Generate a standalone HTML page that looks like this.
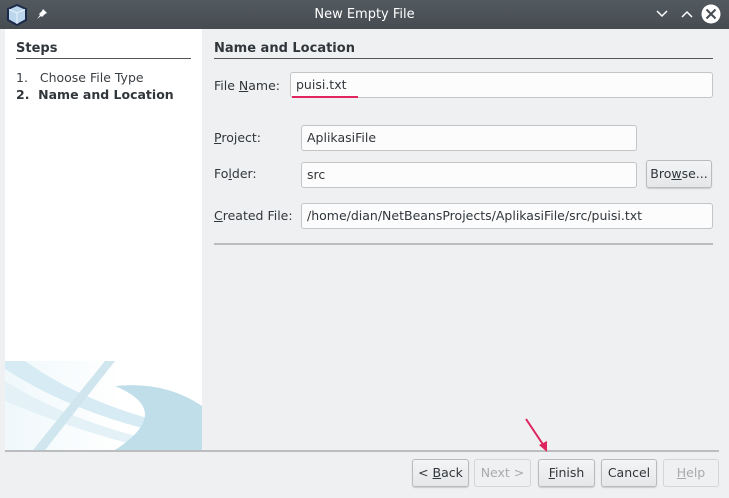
<!DOCTYPE html>
<html><head><style>
*{margin:0;padding:0;box-sizing:border-box}
body{width:729px;height:498px;background:#eff0f1;font-family:"DejaVu Sans","Liberation Sans",sans-serif;font-size:12.5px;color:#31363b;position:relative;overflow:hidden}
.a{position:absolute}
.tb{left:0;top:0;width:729px;height:29px;background:linear-gradient(#525a60,#454b51);color:#fff;text-align:center;line-height:29px;font-size:13px}
.inp{position:absolute;background:#fcfcfc;border:1px solid #c3c5c7;border-radius:3px;height:26px;line-height:24px;padding-left:5px;color:#31363b}
.lbl{position:absolute;line-height:16px}
.btn{position:absolute;top:459px;height:28px;border:1px solid #b9bbbd;border-radius:3px;background:linear-gradient(#f3f4f5,#e6e7e8);text-align:center;line-height:26px;box-shadow:0 1px 1px rgba(0,0,0,.15)}
.dis{color:#a8aaac;background:#eff0f1;border-color:#d3d5d7;box-shadow:none}
u{text-decoration:underline}
</style></head><body>
<div class="a tb">New Empty File</div>
<svg class="a" style="left:6px;top:4px" width="22" height="22" viewBox="0 0 22 22"><path d="M11 1 L20 5 V16 L11 21 L2 16 V5 Z" fill="#bcd6ee" stroke="#1c2a4a" stroke-width="2"/><path d="M11 9 V20 M3 5.5 L11 9 L19 5.5" stroke="#e8f2fb" stroke-width="1" fill="none"/></svg>
<svg class="a" style="left:36px;top:8px" width="12" height="12" viewBox="0 0 12 12"><path d="M7 1 L11 5 L9 6 L6 9 L5 8 L1 11 L4 7 L3 6 L6 3 Z" fill="#fff"/></svg>
<svg class="a" style="left:655px;top:9px" width="14" height="10"><path d="M2 2 L7 7 L12 2" stroke="#fff" stroke-width="1.5" fill="none"/></svg>
<svg class="a" style="left:680px;top:9px" width="14" height="10"><path d="M2 8 L7 3 L12 8" stroke="#fff" stroke-width="1.5" fill="none"/></svg>
<svg class="a" style="left:701px;top:4px" width="20" height="20"><circle cx="10" cy="10" r="9.5" fill="#fff"/><path d="M5.5 5.5 L14.5 14.5 M14.5 5.5 L5.5 14.5" stroke="#454b51" stroke-width="2"/></svg>

<div class="a" style="left:5px;top:29px;width:197px;height:421px;background:#fff;overflow:hidden">
<div class="a" style="left:0;top:332px;width:197px;height:89px;background:linear-gradient(90deg,#f0f8fb,#fff 60%)"></div>
<svg class="a" style="left:0;top:332px" width="197" height="89" viewBox="0 0 197 89"><path d="M0 0 L20 0 Q90 50 197 70 L197 80 Q80 60 0 8 Z" fill="#d6ebf3"/><path d="M0 20 Q80 70 197 89 L150 89 Q70 70 0 40 Z" fill="#e4f2f7"/><path d="M100 0 L110 0 L40 89 L28 89 Z" fill="#cfe6ef"/><path d="M110 25 Q160 20 197 45 L197 89 L110 89 Q170 50 110 25 Z" fill="#bfdeea"/></svg>
<div class="a" style="left:11px;top:12px;font-weight:bold;font-size:13px">Steps</div>
<div class="a" style="left:11px;top:29px;width:175px;height:1px;background:#555"></div>
<div class="a" style="left:11px;top:41px;color:#3a3f44">1.&nbsp;&nbsp;&nbsp;Choose File Type</div>
<div class="a" style="left:11px;top:58px;font-weight:bold">2.&nbsp;&nbsp;Name and Location</div>
</div>

<div class="a" style="left:214px;top:41px;font-weight:bold;font-size:13px">Name and Location</div>
<div class="a" style="left:214px;top:58px;width:499px;height:1px;background:#555"></div>

<div class="lbl" style="left:214px;top:78px">File <u>N</u>ame:</div>
<div class="inp" style="left:290px;top:72px;width:423px">puisi.txt</div>
<div class="a" style="left:292px;top:96px;width:66px;height:2px;background:#e0245e"></div>

<div class="lbl" style="left:214px;top:130px"><u>P</u>roject:</div>
<div class="inp" style="left:301px;top:125px;width:336px">AplikasiFile</div>
<div class="lbl" style="left:214px;top:166px">Fo<u>l</u>der:</div>
<div class="inp" style="left:301px;top:162px;width:336px">src</div>
<div class="btn" style="left:646px;top:160px;width:66px">Bro<u>w</u>se...</div>
<div class="lbl" style="left:214px;top:208px"><u>C</u>reated File:</div>
<div class="inp" style="left:301px;top:203px;width:412px">/home/dian/NetBeansProjects/AplikasiFile/src/puisi.txt</div>
<div class="a" style="left:214px;top:243px;width:499px;height:2px;background:#bbbdbf"></div>

<div class="a" style="left:5px;top:450px;width:714px;height:2px;background:#bbbdbf"></div>
<svg class="a" style="left:520px;top:415px" width="32" height="40"><path d="M6 4 L26 34" stroke="#e0245e" stroke-width="2"/><path d="M27 37 L19 30 L27 26 Z" fill="#e0245e"/></svg>
<div class="btn" style="left:412px;width:57px">&lt; <u>B</u>ack</div>
<div class="btn dis" style="left:474px;width:57px">Next &gt;</div>
<div class="btn" style="left:538px;width:57px"><u>F</u>inish</div>
<div class="btn" style="left:601px;width:56px">Cancel</div>
<div class="btn dis" style="left:663px;width:56px"><u>H</u>elp</div>
</body></html>
